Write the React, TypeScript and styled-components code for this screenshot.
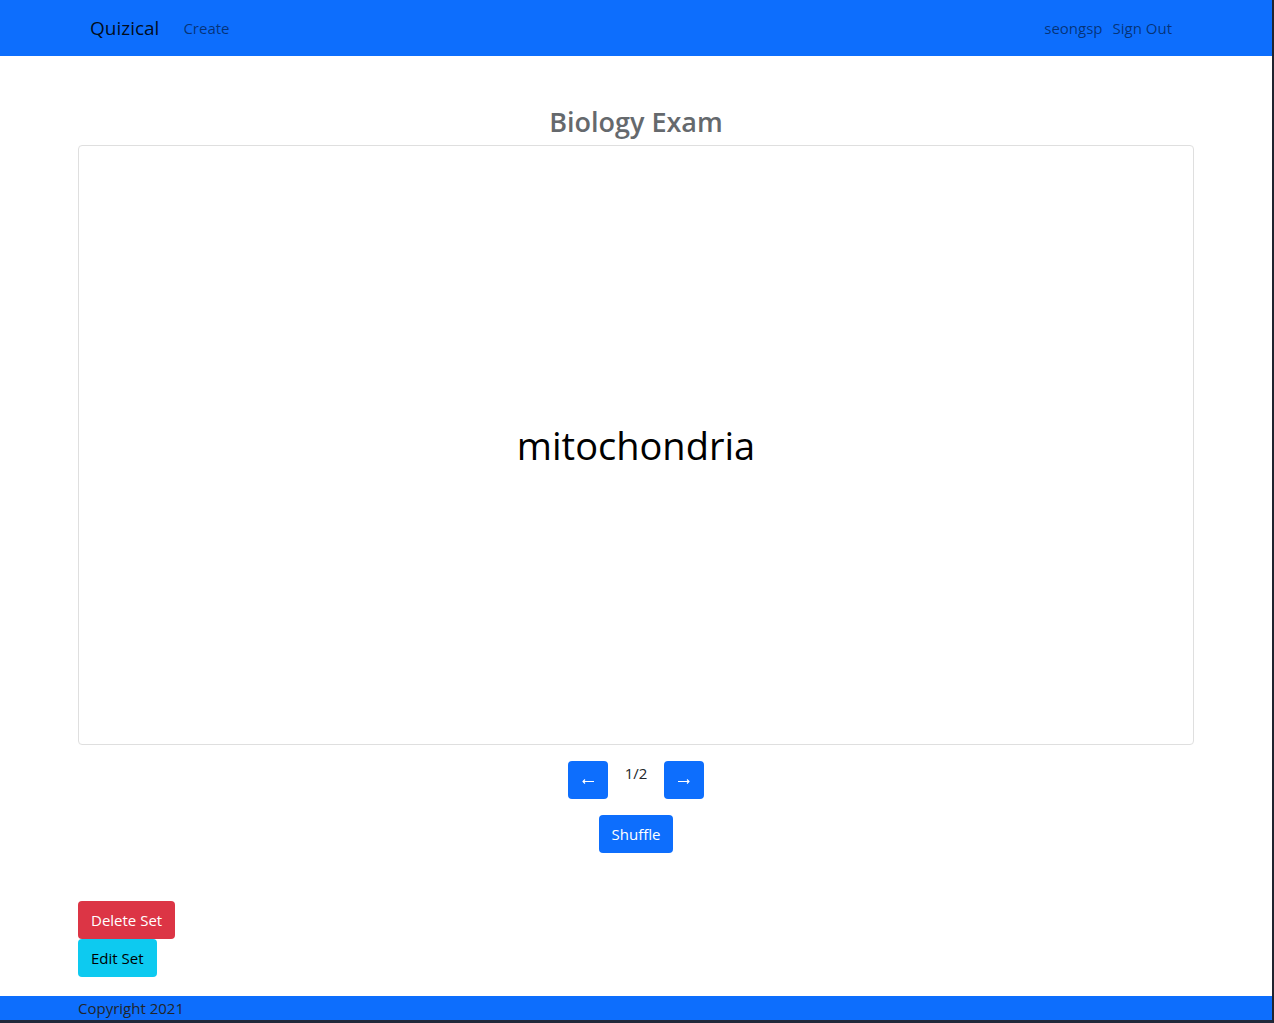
import React, { useState } from "react";
import styled, { createGlobalStyle } from "styled-components";

const GlobalStyle = createGlobalStyle`
  *, *::before, *::after { box-sizing: border-box; }
  body {
    margin: 0;
    background: #fff;
    color: #212529;
    font-family: "Open Sans", "Noto Sans", sans-serif;
    font-size: 15px;
    line-height: 24px;
  }
`;

const Page = styled.div`
  display: flex;
  flex-direction: column;
  min-height: 100vh;
  border-right: 2px solid #20242f;
  border-bottom: 3px solid #20283a;
`;

const Container = styled.div`
  width: 100%;
  max-width: 1140px;
  margin: 0 auto;
  padding: 0 12px;
`;

const Header = styled.header`
  background: #0d6efd;
`;

const Nav = styled.nav`
  display: flex;
  align-items: center;
  height: 56px;
  padding: 0 12px;
`;

const Brand = styled.a`
  margin-right: 24px;
  color: rgba(0, 0, 0, 0.9);
  font-size: 19px;
  line-height: 30px;
  text-decoration: none;
`;

const NavLink = styled.a`
  color: rgba(0, 0, 0, 0.55);
  text-decoration: none;
`;

const Account = styled.div`
  display: flex;
  gap: 10px;
  margin-left: auto;
  padding-right: 10px;
`;

const Main = styled.main`
  padding: 48px 0 19px;
`;

const Title = styled.h1`
  margin: 0;
  padding-bottom: 6px;
  color: #65696d;
  font-size: 27px;
  font-weight: 600;
  line-height: 35px;
  text-align: center;
`;

const Card = styled.button`
  display: flex;
  align-items: center;
  justify-content: center;
  width: 100%;
  min-height: 600px;
  padding: 16px;
  border: 1px solid #dfdfdf;
  border-radius: 4px;
  background: #fff;
  color: #000;
  font-family: inherit;
  font-size: 38px;
  line-height: 60px;
  cursor: pointer;
`;

const Controls = styled.div`
  display: flex;
  justify-content: center;
  gap: 16px;
  margin-top: 16px;
`;

const Counter = styled.span`
  min-width: 24px;
  text-align: center;
`;

const tones = {
  primary: ["#0d6efd", "#fff"],
  danger: ["#dc3545", "#fff"],
  info: ["#0dcaf0", "#000"],
};

const Button = styled.button<{ $tone?: keyof typeof tones }>`
  height: 38px;
  padding: 0 13px;
  border: 0;
  border-radius: 4px;
  background: ${({ $tone = "primary" }) => tones[$tone][0]};
  color: ${({ $tone = "primary" }) => tones[$tone][1]};
  font-family: inherit;
  font-size: 15px;
  line-height: 24px;
  cursor: pointer;
`;

const ArrowButton = styled(Button)`
  display: flex;
  align-items: center;
  justify-content: center;
  width: 40px;
  padding: 0;
`;

const Actions = styled.div`
  display: flex;
  flex-direction: column;
  align-items: flex-start;
  margin-top: 48px;
`;

const Footer = styled.footer`
  margin-top: auto;
  background: #0d6efd;
`;

const Arrow = ({ back = false }: { back?: boolean }) => (
  <svg width="14" height="10" viewBox="0 0 14 10" fill="none" stroke="currentColor" strokeWidth="1.1" aria-hidden="true">
    <path d={back ? "M13 6.5H2M4 4.5L2 6.5L4 8.5" : "M1 6.5H12M10 4.5L12 6.5L10 8.5"} />
  </svg>
);

const cards = ["mitochondria", "nucleus"];

export default function App() {
  const [index, setIndex] = useState(0);
  const step = (by: number) => setIndex((index + by + cards.length) % cards.length);

  return (
    <>
      <GlobalStyle />
      <Page>
        <Header>
          <Container>
            <Nav>
              <Brand href="#home">Quizical</Brand>
              <NavLink href="#create">Create</NavLink>
              <Account>
                <NavLink href="#profile">seongsp</NavLink>
                <NavLink href="#signout">Sign Out</NavLink>
              </Account>
            </Nav>
          </Container>
        </Header>
        <Main>
          <Container>
            <Title>Biology Exam</Title>
            <Card type="button">{cards[index]}</Card>
            <Controls>
              <ArrowButton type="button" aria-label="Previous card" onClick={() => step(-1)}>
                <Arrow back />
              </ArrowButton>
              <Counter>{index + 1}/{cards.length}</Counter>
              <ArrowButton type="button" aria-label="Next card" onClick={() => step(1)}>
                <Arrow />
              </ArrowButton>
            </Controls>
            <Controls>
              <Button type="button" onClick={() => setIndex(Math.floor(Math.random() * cards.length))}>
                Shuffle
              </Button>
            </Controls>
            <Actions>
              <Button type="button" $tone="danger">Delete Set</Button>
              <Button type="button" $tone="info">Edit Set</Button>
            </Actions>
          </Container>
        </Main>
        <Footer>
          <Container>Copyright 2021</Container>
        </Footer>
      </Page>
    </>
  );
}
